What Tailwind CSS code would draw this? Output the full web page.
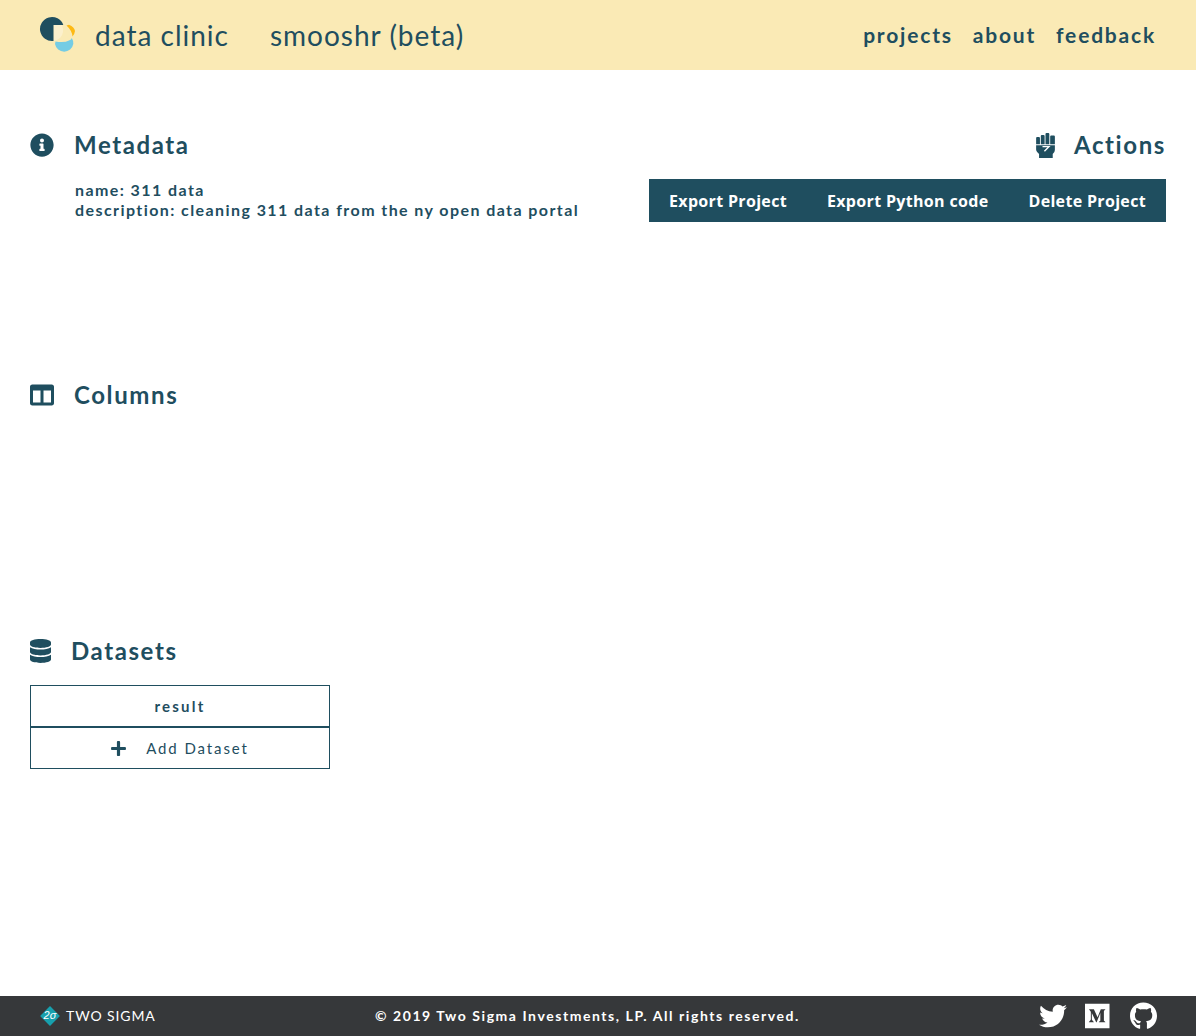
<!DOCTYPE html>
<html lang="en">
<head>
  <meta charset="UTF-8" />
  <meta name="viewport" content="width=device-width, initial-scale=1" />
  <title>smooshr</title>
  <script src="https://cdn.jsdelivr.net/npm/@tailwindcss/browser@4"></script>
</head>
<body class="bg-white font-['Lato',sans-serif] text-[#1f4e5f] h-[1036px] flex flex-col overflow-hidden">
  <!-- header -->
  <header class="h-[70px] bg-[#faeab5] flex items-center justify-between pl-[38px] pr-[40px] shrink-0">
    <div class="flex items-center">
      <svg class="w-[40px] h-[40px] mr-[17px]" viewBox="0 0 40 40">
        <path d="M15.500 10H24Q27 18 22 23Q19 25.500 15.500 25.900Z" fill="#fcf0cc" />
        <path d="M15.500 25.900A12 12 0 1 1 25.300 10H15.500Z" fill="#1f4e5f" />
        <path d="M28.500 10.500L31 9.700Q36.500 12 37 16Q36.500 19.500 34.500 21.500Q34 15.500 28.500 10.500Z" fill="#fdb913" />
        <path d="M17.500 26.500Q26.500 28 31 25.500Q33.500 24.500 33.800 23A9.500 9.500 0 0 1 35.300 29A9.300 9.300 0 0 1 17 29Z" fill="#74cce4" />
      </svg>
      <span class="text-[28px] tracking-[1px] leading-none">data clinic</span>
      <span class="text-[28px] tracking-[1px] leading-none ml-[41px]">smooshr (beta)</span>
    </div>
    <nav class="flex items-center gap-[20px] pb-[1px] text-[21px] font-bold tracking-[1.8px]">
      <a href="#">projects</a>
      <a href="#">about</a>
      <a href="#">feedback</a>
    </nav>
  </header>

  <main class="flex-1 px-[30px]">
    <section class="h-[250px] pt-[55px] flex justify-between">
      <div>
        <h2 class="flex items-center text-[24px] font-bold tracking-[1.6px] h-[40px]">
          <svg class="w-[24px] h-[24px] mr-[20px]" viewBox="0 0 512 512" fill="currentColor"><path d="M256 8C119.043 8 8 119.083 8 256c0 136.997 111.043 248 248 248s248-111.003 248-248C504 119.083 392.957 8 256 8zm0 110c23.196 0 42 18.804 42 42s-18.804 42-42 42-42-18.804-42-42 18.804-42 42-42zm56 254c0 6.627-5.373 12-12 12h-88c-6.627 0-12-5.373-12-12v-24c0-6.627 5.373-12 12-12h12v-64h-12c-6.627 0-12-5.373-12-12v-24c0-6.627 5.373-12 12-12h64c6.627 0 12 5.373 12 12v100h12c6.627 0 12 5.373 12 12v24z"/></svg>
          Metadata
        </h2>
        <div class="ml-[45px] mt-[15px] text-[16px] font-bold tracking-[1.42px] leading-[20px]">
          <p>name: 311 data</p>
          <p>description: cleaning 311 data from the ny open data portal</p>
        </div>
      </div>
      <div class="flex flex-col items-end">
        <h2 class="flex items-center text-[24px] font-bold tracking-[1.6px] h-[40px]">
          <svg class="w-[21px] h-[25px] mr-[18px]" viewBox="0 0 384 512" fill="currentColor">
            <path d="M0 100a20 20 0 0 1 20-20h38a20 20 0 0 1 20 20v132H0zM96 60a20 20 0 0 1 20-20h38a20 20 0 0 1 20 20v172H96zM192 20a20 20 0 0 1 20-20h38a20 20 0 0 1 20 20v212h-78zM288 70a20 20 0 0 1 20-20h56a20 20 0 0 1 20 20v162h-96zM0 250H384V350Q384 400 340 430V512H60V430L20 390Q0 370 0 340Z"/>
            <path d="M130 280H262L170 375" fill="none" stroke="#fff" stroke-width="28"/>
          </svg>
          Actions
        </h2>
        <div class="mt-[14px] flex bg-[#1f4e5f] text-white font-['Open_Sans',sans-serif] font-bold text-[16px] tracking-[0.33px] h-[43px] items-center px-[20px] gap-[40px]">
          <button>Export Project</button>
          <button>Export Python code</button>
          <button>Delete Project</button>
        </div>
      </div>
    </section>

    <section class="h-[256px] pt-[55px]">
      <h2 class="flex items-center text-[24px] font-bold tracking-[1.6px] h-[40px]">
        <svg class="w-[24px] h-[24px] mr-[20px]" viewBox="0 0 512 512" fill="currentColor"><path d="M464 32H48C21.490 32 0 53.490 0 80v352c0 26.510 21.490 48 48 48h416c26.510 0 48-21.490 48-48V80c0-26.510-21.490-48-48-48zM224 416H64V160h160v256zm224 0H288V160h160v256z"/></svg>
        Columns
      </h2>
    </section>

    <section class="pt-[55px]">
      <h2 class="flex items-center text-[24px] font-bold tracking-[1.6px] h-[40px]">
        <svg class="w-[21px] h-[24px] mr-[20px]" viewBox="0 0 448 512" fill="currentColor"><path d="M448 73.143v45.714C448 159.143 347.667 192 224 192S0 159.143 0 118.857V73.143C0 32.857 100.333 0 224 0s224 32.857 224 73.143zM448 176v102.857C448 319.143 347.667 352 224 352S0 319.143 0 278.857V176c48.125 33.143 136.208 48.572 224 48.572S399.874 209.143 448 176zm0 160v102.857C448 479.143 347.667 512 224 512S0 479.143 0 438.857V336c48.125 33.143 136.208 48.572 224 48.572S399.874 369.143 448 336z"/></svg>
        Datasets
      </h2>
      <div class="w-[300px] mt-[14px]">
        <div class="h-[42px] border border-[#1f4e5f] flex items-center justify-center text-[15px] font-bold tracking-[2.25px]">result</div>
        <div class="h-[42px] border border-[#1f4e5f] flex items-center justify-center text-[15px] tracking-[1.9px]">
          <svg class="w-[15px] h-[17px] mr-[20px]" viewBox="0 0 448 512" fill="currentColor"><path d="M416 208H272V64c0-17.670-14.330-32-32-32h-32c-17.670 0-32 14.330-32 32v144H32c-17.670 0-32 14.330-32 32v32c0 17.670 14.330 32 32 32h144v144c0 17.670 14.330 32 32 32h32c17.670 0 32-14.330 32-32V304h144c17.670 0 32-14.330 32-32v-32c0-17.670-14.330-32-32-32z"/></svg>
          Add Dataset
        </div>
      </div>
    </section>
  </main>

  <!-- footer -->
  <footer class="h-[40px] bg-[#36383a] text-white grid grid-cols-[335px_auto_1fr] items-center pl-[40px] pr-[39px] pb-[1px] shrink-0">
    <div class="flex items-center">
      <span class="w-[20px] h-[20px] flex items-center justify-center relative mr-[6px]">
        <span class="absolute w-[14px] h-[14px] rotate-45 bg-[#17a0ad]"></span>
        <span class="relative text-[11px] italic leading-none font-['Liberation_Sans',sans-serif]">2σ</span>
      </span>
      <span class="text-[14px] tracking-[0.9px]">TWO SIGMA</span>
    </div>
    <p class="text-[14px] font-bold tracking-[1.56px]">© 2019 Two Sigma Investments, LP. All rights reserved.</p>
    <div class="flex items-center justify-end">
      <svg class="w-[28px] h-[28px] mr-[18px]" viewBox="0 0 512 512" fill="currentColor"><path d="M459.370 151.716c.325 4.548.325 9.097.325 13.645 0 138.720-105.583 298.558-298.558 298.558-59.452 0-114.680-17.219-161.137-47.106 8.447.974 16.568 1.299 25.340 1.299 49.055 0 94.213-16.568 130.274-44.832-46.132-.975-84.792-31.188-98.112-72.772 6.498.974 12.995 1.624 19.818 1.624 9.421 0 18.843-1.300 27.614-3.573-48.081-9.747-84.143-51.980-84.143-102.985v-1.299c13.969 7.797 30.214 12.670 47.431 13.319-28.264-18.843-46.781-51.005-46.781-87.391 0-19.492 5.197-37.360 14.294-52.954 51.655 63.675 129.300 105.258 216.365 109.807-1.624-7.797-2.599-15.918-2.599-24.040 0-57.828 46.782-104.934 104.934-104.934 30.213 0 57.502 12.670 76.670 33.137 23.715-4.548 46.456-13.645 66.599-25.340-7.798 24.366-24.366 44.833-46.132 57.827 21.117-2.273 41.584-8.122 60.426-16.243-14.292 20.791-32.161 39.308-52.628 54.253z"/></svg>
      <svg class="w-[24.500px] h-[28px] mr-[20.500px]" viewBox="0 0 448 512" fill="currentColor"><path d="M0 32v448h448V32H0zm372.200 106.100l-24 23c-2.100 1.600-3.100 4.200-2.700 6.700v169.300c-.4 2.600.6 5.200 2.700 6.700l23.500 23v5.100h-118V367l24.300-23.600c2.400-2.400 2.400-3.100 2.400-6.700V199.800l-67.600 171.600h-9.100L125 199.800v115c-.7 4.800 1 9.700 4.400 13.200l31.600 38.300v5.100H71.200v-5.100l31.600-38.300c3.400-3.500 4.900-8.400 4.100-13.200v-133c.4-3.700-1-7.300-3.800-9.800L75 138.100V133h87.300l67.400 148L289 133.100h83.200v5z"/></svg>
      <svg class="w-[27px] h-[28px]" viewBox="0 0 496 512" fill="currentColor"><path d="M244.800 8C106.100 8 0 113.300 0 252c0 110.900 69.800 205.800 169.500 239.200 12.800 2.300 17.300-5.600 17.300-12.100 0-6.200-.3-40.400-.3-61.400 0 0-70 15-84.700-29.800 0 0-11.400-29.100-27.800-36.600 0 0-22.900-15.700 1.600-15.400 0 0 24.900 2 38.600 25.800 21.900 38.600 58.600 27.500 72.900 20.900 2.300-16 8.800-27.100 16-33.700-55.900-6.200-112.300-14.300-112.300-110.500 0-27.500 7.600-41.300 23.600-58.900-2.600-6.500-11.100-33.300 2.600-67.900 20.900-6.500 69 27 69 27 20-5.600 41.500-8.500 62.800-8.500s42.800 2.900 62.800 8.500c0 0 48.100-33.600 69-27 13.700 34.700 5.200 61.400 2.600 67.900 16 17.700 25.800 31.500 25.800 58.900 0 96.500-58.900 104.200-114.800 110.500 9.200 7.900 17 22.900 17 46.400 0 33.700-.3 75.400-.3 83.600 0 6.500 4.600 14.400 17.300 12.100C428.200 457.800 496 362.900 496 252 496 113.300 383.500 8 244.800 8z"/></svg>
    </div>
  </footer>
</body>
</html>
